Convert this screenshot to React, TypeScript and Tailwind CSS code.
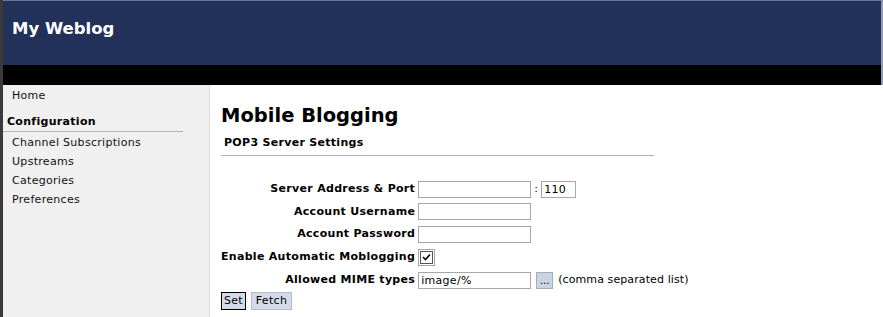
import { useState } from 'react'

const font = "font-['DejaVu_Sans',Verdana,sans-serif]"

const navItems = ['Channel Subscriptions', 'Upstreams', 'Categories', 'Preferences']

const TextBox = ({ value = '', width = 'w-[113px]' }: { value?: string; width?: string }) => (
  <input
    defaultValue={value}
    className={`${width} h-[17px] border border-[#a7a7a7] bg-white px-[2px] text-[11px] leading-[15px] tracking-[0.3px] text-black outline-none ${font}`}
  />
)

const App = () => {
  const [checked, setChecked] = useState(true)

  return (
    <div className={`flex h-[317px] w-[883px] flex-col overflow-hidden border-l-[3px] border-[#3a3a3a] bg-white text-[11px] tracking-[0.3px] text-black ${font}`}>
      <header className="h-[65px] shrink-0 border-t border-r-2 border-t-[#6b7893] border-r-[#8f9bb0] bg-[#22315a] pl-[9px] pt-[16px]">
        <h1 className="text-[16.5px] font-bold leading-[24px] tracking-normal text-white">My Weblog</h1>
      </header>
      <div className="h-[20px] shrink-0 border-r-2 border-[#8f9bb0] bg-black" />
      <div className="flex flex-1">
        <aside className="w-[207px] shrink-0 border-r border-[#dcdcdc] bg-[#f0f0f0] pt-px">
          <div className="h-[19px] pl-[9px] leading-[19px] text-[#111]">Home</div>
          <div className="mt-[8px] h-[18px] pl-[4px] font-bold leading-[18px]">Configuration</div>
          <div className="h-px w-[180px] bg-[#b4b4b4]" />
          <ul className="pt-px">
            {navItems.map((item) => (
              <li key={item} className="h-[19px] pl-[9px] leading-[19px] text-[#111]">
                {item}
              </li>
            ))}
          </ul>
        </aside>
        <main className="flex-1 pl-[11px] pt-[19px]">
          <h2 className="text-[19.5px] font-bold leading-[24px] tracking-normal">Mobile Blogging</h2>
          <h3 className="mt-[7px] pl-[3px] font-bold leading-[16px]">POP3 Server Settings</h3>
          <div className="mt-[4px] h-px w-[433px] bg-[#b0b0b0]" />
          <table className="mt-[22px] border-collapse">
            <tbody>
              <tr className="h-[23px]">
                <td className="pr-[3px] text-right font-bold">Server Address &amp; Port</td>
                <td>
                  <div className="flex items-center">
                    <TextBox />
                    <span className="mx-[3px]">:</span>
                    <TextBox value="110" width="w-[35px]" />
                  </div>
                </td>
              </tr>
              <tr className="h-[22px]">
                <td className="pr-[3px] text-right font-bold">Account Username</td>
                <td>
                  <TextBox />
                </td>
              </tr>
              <tr className="h-[23px]">
                <td className="pr-[3px] text-right font-bold">Account Password</td>
                <td>
                  <input
                    type="password"
                    className="h-[17px] w-[113px] border border-[#a7a7a7] bg-white px-[2px] outline-none"
                  />
                </td>
              </tr>
              <tr className="h-[23px]">
                <td className="pr-[3px] text-right font-bold">Enable Automatic Moblogging</td>
                <td>
                  <button
                    onClick={() => setChecked(!checked)}
                    className="flex h-[17px] w-[17px] items-center justify-center border border-[#a7a7a7] bg-white"
                  >
                    <span className="flex h-[13px] w-[13px] items-center justify-center border border-[#555] bg-white">
                      {checked && (
                        <svg width="9" height="9" viewBox="0 0 9 9">
                          <path d="M1 4 L3.5 6.5 L8 1.5" fill="none" stroke="#000" strokeWidth="1.6" />
                        </svg>
                      )}
                    </span>
                  </button>
                </td>
              </tr>
              <tr className="h-[23px]">
                <td className="pr-[3px] text-right font-bold">Allowed MIME types</td>
                <td>
                  <div className="flex items-center">
                    <TextBox value="image/%" />
                    <button className="ml-[5px] h-[17px] w-[17px] border border-[#a3acbd] bg-[#c9d3e2] text-[10px] leading-[12px] tracking-normal">
                      ...
                    </button>
                    <span className="ml-[5px] tracking-[0.1px]">(comma separated list)</span>
                  </div>
                </td>
              </tr>
            </tbody>
          </table>
          <div className="flex gap-[5px]">
            <button className="h-[18px] w-[25px] border border-black bg-[#d3dbe8] leading-[14px]">Set</button>
            <button className="h-[18px] w-[41px] border border-[#b3bccb] bg-[#d3dbe8] leading-[14px]">Fetch</button>
          </div>
        </main>
      </div>
    </div>
  )
}

export default App
